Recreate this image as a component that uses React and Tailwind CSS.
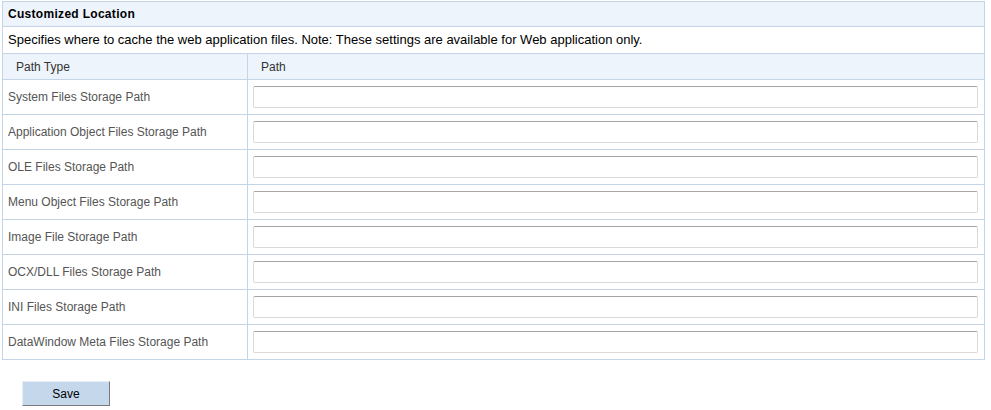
import React from "react";

const rows = [
  "System Files Storage Path",
  "Application Object Files Storage Path",
  "OLE Files Storage Path",
  "Menu Object Files Storage Path",
  "Image File Storage Path",
  "OCX/DLL Files Storage Path",
  "INI Files Storage Path",
  "DataWindow Meta Files Storage Path",
];

const App = () => {
  return (
    <div className="bg-white w-[991px] h-[410px] pt-[1px] pl-[2px] text-[12px] font-['Liberation_Sans',Arial,sans-serif]">
      <table className="w-[983px] border-collapse">
        <tbody>
          <tr className="h-[25px] bg-[#eef4fc]">
            <td colSpan={2} className="border border-[#c4d5e8] px-[5px] font-bold tracking-[0.3px] text-black">
              Customized Location
            </td>
          </tr>
          <tr className="h-[27px] bg-white">
            <td colSpan={2} className="border border-[#c4d5e8] px-[5px] text-[13px] text-black">
              Specifies where to cache the web application files. Note: These settings are available for Web application only.
            </td>
          </tr>
          <tr className="h-[26px] bg-[#eef4fc] text-[#333]">
            <td className="w-[245px] border border-[#c4d5e8] pl-[13px]">Path Type</td>
            <td className="border border-[#c4d5e8] pl-[13px]">Path</td>
          </tr>
          {rows.map((label) => (
            <tr key={label} className="h-[35px]">
              <td className="border border-[#c4d5e8] pl-[5px] text-[#555]">{label}</td>
              <td className="border border-[#c4d5e8] pl-[5px] pr-[6px]">
                <input
                  type="text"
                  className="block w-full h-[22px] border border-[#d9d9d9] border-t-[#a5a5a5] rounded-[2px] bg-white outline-none"
                />
              </td>
            </tr>
          ))}
        </tbody>
      </table>
      <div className="pt-[21px] pl-[20px]">
        <button className="w-[88px] h-[25px] bg-[#c5d7eb] border border-[#e5edf5] border-r-[#7a7a7a] border-b-[#7a7a7a] text-black text-[12px] font-['Liberation_Sans',Arial,sans-serif]">
          Save
        </button>
      </div>
    </div>
  );
};

export default App;
